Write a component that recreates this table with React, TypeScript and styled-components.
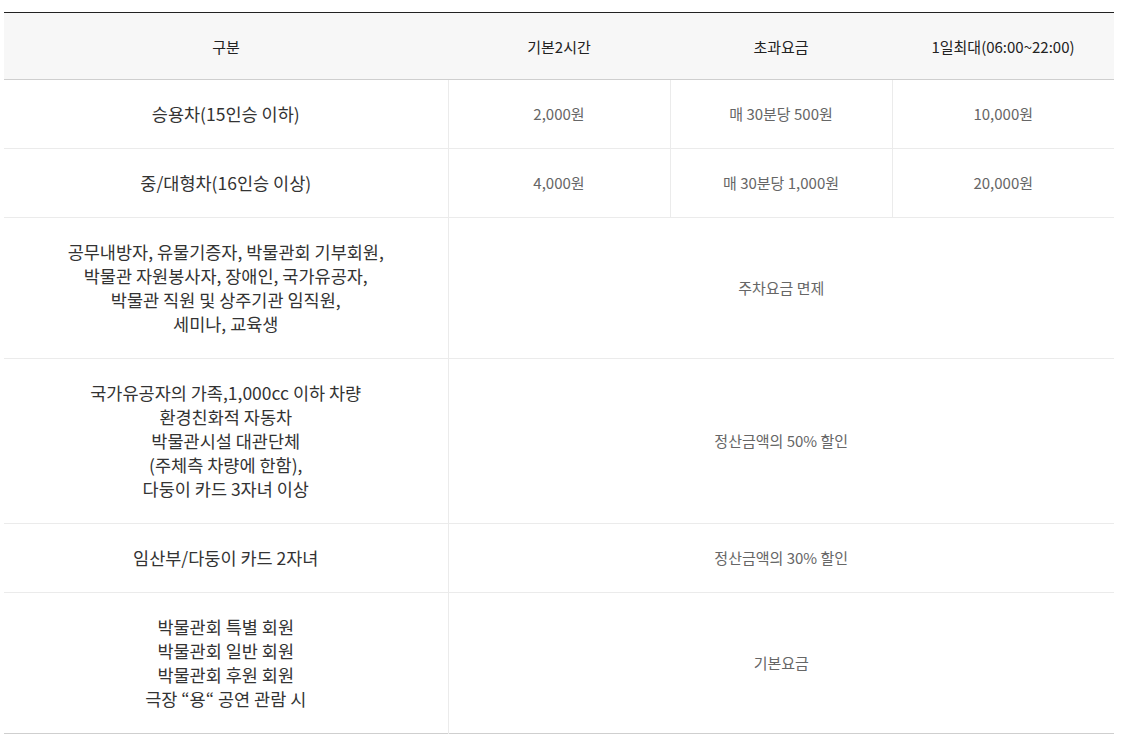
import styled, { createGlobalStyle } from 'styled-components';

type FeeRow = {
  label: string[];
  values: string[];
};

const rows: FeeRow[] = [
  { label: ['승용차(15인승 이하)'], values: ['2,000원', '매 30분당 500원', '10,000원'] },
  { label: ['중/대형차(16인승 이상)'], values: ['4,000원', '매 30분당 1,000원', '20,000원'] },
  {
    label: [
      '공무내방자, 유물기증자, 박물관회 기부회원,',
      '박물관 자원봉사자, 장애인, 국가유공자,',
      '박물관 직원 및 상주기관 임직원,',
      '세미나, 교육생',
    ],
    values: ['주차요금 면제'],
  },
  {
    label: [
      '국가유공자의 가족,1,000cc 이하 차량',
      '환경친화적 자동차',
      '박물관시설 대관단체',
      '(주체측 차량에 한함),',
      '다둥이 카드 3자녀 이상',
    ],
    values: ['정산금액의 50% 할인'],
  },
  { label: ['임산부/다둥이 카드 2자녀'], values: ['정산금액의 30% 할인'] },
  {
    label: ['박물관회 특별 회원', '박물관회 일반 회원', '박물관회 후원 회원', '극장 “용“ 공연 관람 시'],
    values: ['기본요금'],
  },
];

const App = () => {
  return (
    <>
      <GlobalStyle />
      <Page>
        <FeeTable>
          <colgroup>
            <col style={{ width: '40%' }} />
            <col style={{ width: '20%' }} />
            <col style={{ width: '20%' }} />
            <col style={{ width: '20%' }} />
          </colgroup>
          <thead>
            <tr>
              <HeadCell>구분</HeadCell>
              <HeadCell>기본2시간</HeadCell>
              <HeadCell>초과요금</HeadCell>
              <HeadCell>1일최대(06:00~22:00)</HeadCell>
            </tr>
          </thead>
          <tbody>
            {rows.map((row, i) => (
              <tr key={i}>
                <LabelCell>
                  {row.label.map((line, j) => (
                    <Line key={j}>{line}</Line>
                  ))}
                </LabelCell>
                {row.values.map((value, j) => (
                  <ValueCell
                    key={j}
                    colSpan={row.values.length === 1 ? 3 : 1}
                    $last={j === row.values.length - 1}
                  >
                    {value}
                  </ValueCell>
                ))}
              </tr>
            ))}
          </tbody>
        </FeeTable>
      </Page>
    </>
  );
};

const GlobalStyle = createGlobalStyle`
  body {
    margin: 0;
    background: #fff;
    font-family: "Noto Sans CJK KR", "Noto Sans", sans-serif;
  }
`;

const Page = styled.div`
  padding: 12px 21px 0 4px;
`;

const FeeTable = styled.table`
  width: 100%;
  border-collapse: collapse;
  table-layout: fixed;
  border-top: 1px solid #222;
  border-bottom: 1px solid #cfcfcf;
`;

const HeadCell = styled.th`
  height: 66px;
  padding: 0;
  background: #f7f7f7;
  border-bottom: 1px solid #cfcfcf;
  font-size: 15px;
  font-weight: 400;
  color: #222;
  text-align: center;
  vertical-align: middle;
`;

const LabelCell = styled.td`
  padding: 22px 10px;
  border-top: 1px solid #ebebeb;
  border-right: 1px solid #ebebeb;
  font-size: 17.5px;
  line-height: 24px;
  color: #333;
  text-align: center;
  vertical-align: middle;
`;

const Line = styled.div`
  white-space: nowrap;
`;

const ValueCell = styled.td<{ $last: boolean }>`
  padding: 22px 10px;
  border-top: 1px solid #ebebeb;
  border-right: ${({ $last }) => ($last ? 'none' : '1px solid #ebebeb')};
  font-size: 15px;
  line-height: 24px;
  color: #666;
  text-align: center;
  vertical-align: middle;
`;

export default App;
